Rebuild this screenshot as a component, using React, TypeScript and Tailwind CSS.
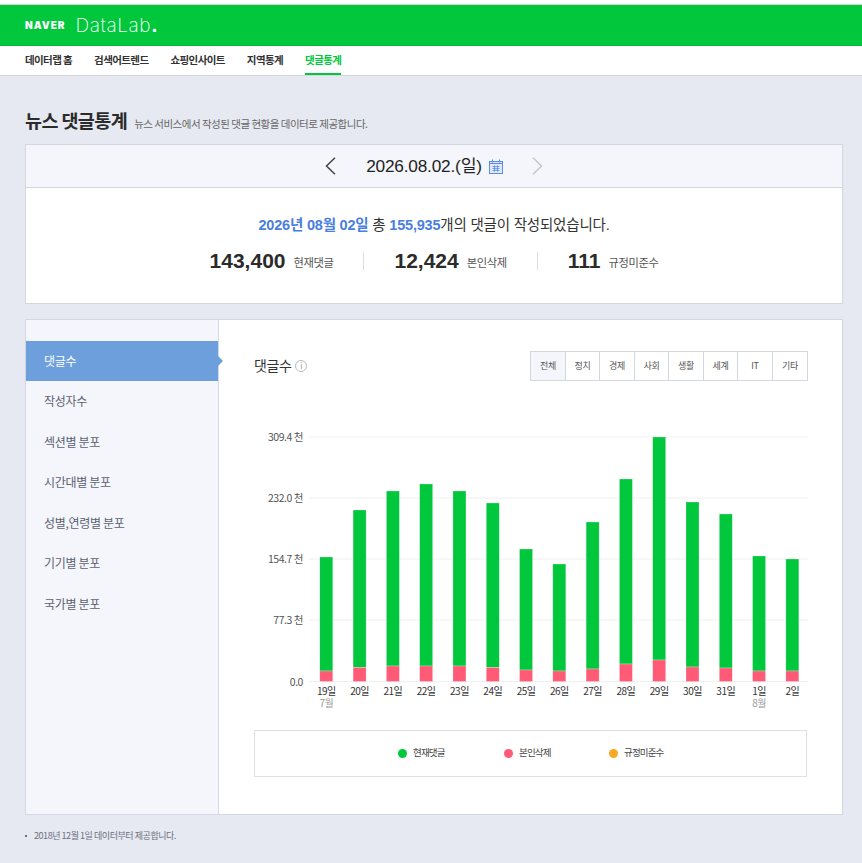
const NAV = ['데이터랩 홈', '검색어트렌드', '쇼핑인사이트', '지역통계', '댓글통계'];
const MENU = ['댓글수', '작성자수', '섹션별 분포', '시간대별 분포', '성별,연령별 분포', '기기별 분포', '국가별 분포'];
const TABS = ['전체', '정치', '경제', '사회', '생활', '세계', 'IT', '기타'];
const TAB_WIDTHS = [35, 34, 35, 34, 35, 34, 35, 34];

// day label, optional month label, y of green top, y of pink top
const BARS: [string, string, number, number][] = [
  ['19일', '7월', 557, 671],
  ['20일', '', 510, 667.5],
  ['21일', '', 491, 666],
  ['22일', '', 484, 666],
  ['23일', '', 491, 666],
  ['24일', '', 503, 667.5],
  ['25일', '', 549, 670],
  ['26일', '', 564, 671],
  ['27일', '', 522, 669],
  ['28일', '', 479, 664],
  ['29일', '', 437, 660],
  ['30일', '', 502, 667],
  ['31일', '', 514, 668],
  ['1일', '8월', 556, 671],
  ['2일', '', 559, 671],
];

const TICKS: [string, number][] = [
  ['309.4 천', 437],
  ['232.0 천', 498],
  ['154.7 천', 559],
  ['77.3 천', 620],
  ['0.0', 681.5],
];

// svg origin sits at page (254, 420)
function Chart() {
  const ox = 254;
  const oy = 420;
  return (
    <svg width="560" height="295" className="block" style={{ fontFamily: '"Noto Sans CJK KR", sans-serif' }}>
      {TICKS.map(([label, y]) => (
        <g key={label}>
          <line x1={309 - ox} x2={808 - ox} y1={y - oy} y2={y - oy} stroke="#f0f0f0" />
          <text x={303 - ox} y={y - oy + 4} textAnchor="end" fontSize="10.5" letterSpacing="-0.45" fill="#555">
            {label}
          </text>
        </g>
      ))}
      {BARS.map(([day, month, top, pink], i) => {
        const cx = 326.3 + i * 33.29 - ox;
        return (
          <g key={day}>
            <rect x={cx - 6.5} y={top - oy} width="13" height={pink - top} fill="#00c73c" stroke="#fff" strokeOpacity="0.5" strokeWidth="0.5" />
            <rect x={cx - 6.5} y={pink - oy} width="13" height={681.5 - pink} fill="#ff5a76" stroke="#fff" strokeOpacity="0.5" strokeWidth="0.5" />
            <text x={cx} y={695 - oy} textAnchor="middle" fontSize="10" letterSpacing="-0.5" fill="#333">
              {day}
            </text>
            {month && (
              <text x={cx} y={707 - oy} textAnchor="middle" fontSize="10" letterSpacing="-0.5" fill="#999">
                {month}
              </text>
            )}
          </g>
        );
      })}
    </svg>
  );
}

function CalendarIcon() {
  return (
    <svg width="14" height="15" viewBox="0 0 14 15" fill="none" className="ml-[7px] mt-[1px]">
      <rect x="0.5" y="2.5" width="13" height="12" fill="#dfe8fa" stroke="#5b8ce6" />
      <path d="M3.5 0.5v3M10.5 0.5v3M1 4.5h12" stroke="#5b8ce6" />
      <path d="M3.5 7.5h7M3.5 9.5h7M3.5 11.5h7M5.5 6.5v6M8.5 6.5v6" stroke="#5b8ce6" strokeWidth="0.8" />
    </svg>
  );
}

function Chevron({ dir, color, className }: { dir: 'left' | 'right'; color: string; className: string }) {
  return (
    <svg width="11" height="18" viewBox="0 0 11 18" fill="none" className={className}>
      <path d={dir === 'left' ? 'M10 0.8L1.5 9l8.5 8.2' : 'M1 0.8L9.5 9L1 17.2'} stroke={color} strokeWidth="1.5" />
    </svg>
  );
}

function Stat({ value, label, last }: { value: string; label: string; last?: boolean }) {
  return (
    <div className={last ? 'flex items-center px-[30px]' : 'flex h-[18px] items-center border-r border-[#dcdde2] px-[30px]'}>
      <span className="text-[21px] font-bold leading-none text-[#2b2b2b] [font-family:'Liberation_Sans',sans-serif]">{value}</span>
      <span className="ml-2 mt-[4px] text-[11.3px] leading-none tracking-[-0.4px] text-[#555]">{label}</span>
    </div>
  );
}

function Legend({ color, label, width }: { color: string; label: string; width: string }) {
  return (
    <div className={`flex items-center ${width}`}>
      <span className={`h-[9px] w-[9px] rounded-full ${color}`} />
      <span className="-mt-[3px] ml-[6px] text-[9.5px] tracking-[-0.85px] text-[#444]">{label}</span>
    </div>
  );
}

export default function App() {
  return (
    <div className="min-h-[863px] w-[862px] overflow-hidden bg-[#e6e9f1] [font-family:'Noto_Sans_CJK_KR',sans-serif]">
      {/* Top bar */}
      <div className="h-[4px] bg-white" />
      <div className="h-px bg-[#d5d5d5]" />
      <header className="flex h-[41px] items-center border-b border-[#00b636] bg-[#00c73c] pl-[25px]">
        <span className="text-[10px] font-black leading-none tracking-[1px] text-white [font-family:'Inter',sans-serif]">NAVER</span>
        <span className="ml-[10px] text-[19px] font-extralight leading-none tracking-[0.6px] text-white [font-family:'Inter',sans-serif]">
          DataLab<span className="font-bold">.</span>
        </span>
      </header>
      <nav className="flex h-[30px] items-stretch border-b border-[#d3d6dd] bg-white pl-[25px]">
        {NAV.map((item, i) => (
          <div
            key={item}
            className={
              i === 4
                ? 'mr-[22px] flex items-center border-b-2 border-[#00c73c] pt-[1px] text-[10.5px] font-bold tracking-[-0.6px] text-[#00c73c]'
                : 'mr-[22px] flex items-center pb-[1px] text-[10.5px] font-bold tracking-[-0.6px] text-[#333]'
            }
          >
            {item}
          </div>
        ))}
      </nav>

      <main className="px-[25px]">
        <div className="flex h-[68px] items-end pb-[11px]">
          <h1 className="text-[18.5px] font-bold leading-[26px] tracking-[-0.6px] text-[#2b2b2b]">뉴스 댓글통계</h1>
          <p className="ml-[7px] text-[10.5px] leading-[18px] tracking-[-0.5px] text-[#666]">
            뉴스 서비스에서 작성된 댓글 현황을 데이터로 제공합니다.
          </p>
        </div>

        {/* Date panel */}
        <section className="h-[160px] w-[818px] border border-[#d3d6dd] bg-white">
          <div className="flex h-[43px] items-center justify-center border-b border-[#d3d6dd] bg-[#f5f6fb]">
            <Chevron dir="left" color="#444" className="mr-[30px]" />
            <span className="mt-[2px] text-[17.25px] leading-none tracking-[-0.2px] text-[#222] [font-family:'Liberation_Sans','Noto_Sans_CJK_KR',sans-serif]">
              2026.08.02.(일)
            </span>
            <CalendarIcon />
            <Chevron dir="right" color="#c4c6cc" className="ml-[29px]" />
          </div>
          <p className="mt-[25px] text-center text-[14.5px] leading-[24px] tracking-[-0.2px] text-[#333] [font-family:'Liberation_Sans','Noto_Sans_CJK_KR',sans-serif]">
            <b className="text-[#4a7ee0]">2026년 08월 02일</b> 총 <b className="text-[#4a7ee0]">155,935</b>개의 댓글이 작성되었습니다.
          </p>
          <div className="mt-[13px] flex items-center justify-center">
            <Stat value="143,400" label="현재댓글" />
            <Stat value="12,424" label="본인삭제" />
            <Stat value="111" label="규정미준수" last />
          </div>
        </section>

        {/* Chart panel */}
        <section className="mt-[15px] flex h-[496px] w-[818px] border border-[#d3d6e4] bg-white">
          <aside className="w-[193px] shrink-0 border-r border-[#d3dbe8] bg-[#f5f6fc] pt-[21px]">
            {MENU.map((item, i) => (
              <div
                key={item}
                className={
                  i === 0
                    ? 'relative flex h-[40px] items-center bg-[#6d9fdc] pl-[18px] text-[12px] tracking-[-0.3px] text-white'
                    : 'flex h-[40.5px] items-center pl-[18px] text-[12px] tracking-[-0.3px] text-[#5b6270]'
                }
              >
                {item}
                {i === 0 && (
                  <span className="absolute left-full top-[15px] h-0 w-0 border-y-[5px] border-l-[5px] border-y-transparent border-l-[#6d9fdc]" />
                )}
              </div>
            ))}
          </aside>

          <div className="min-w-0 flex-1 pl-[35px]">
            <div className="mt-[31px] flex h-[30px] items-center pr-[34px]">
              <h2 className="-mt-[2px] text-[14px] leading-none tracking-[-0.4px] text-[#333]">댓글수</h2>
              <span className="ml-[4px] flex h-[12px] w-[12px] items-center justify-center rounded-full border border-[#bbb] text-[8px] leading-none text-[#999]">
                i
              </span>
              <div className="ml-auto flex h-[30px] border border-[#d3d6dd]">
                {TABS.map((tab, i) => (
                  <div
                    key={tab}
                    style={{ width: TAB_WIDTHS[i] }}
                    className={
                      'flex items-center justify-center border-[#d3d6dd] text-[9px] tracking-[-0.3px] text-[#555] ' +
                      (i === 0 ? 'bg-[#f5f6fb] ' : '') +
                      (i < 7 ? 'border-r' : '')
                    }
                  >
                    {tab}
                  </div>
                ))}
              </div>
            </div>

            <div className="mt-[39px]">
              <Chart />
            </div>

            <div className="mt-[15px] flex h-[47px] w-[553px] items-center border border-[#e0e0e0] pl-[143px]">
              <Legend color="bg-[#00c73c]" label="현재댓글" width="w-[106px]" />
              <Legend color="bg-[#ff5a76]" label="본인삭제" width="w-[105px]" />
              <Legend color="bg-[#f9a825]" label="규정미준수" width="w-[80px]" />
            </div>
          </div>
        </section>

        <p className="mt-[13px] flex items-center text-[9px] leading-[16px] tracking-[-0.45px] text-[#6c7080]">
          <span className="mr-[7px] h-[2px] w-[2px] bg-[#6c7080]" />
          2018년 12월 1일 데이터부터 제공합니다.
        </p>
      </main>
    </div>
  );
}
